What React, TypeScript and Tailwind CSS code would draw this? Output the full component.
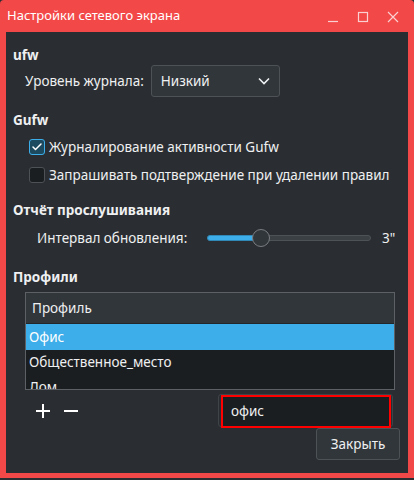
import { Check } from "lucide-react";

const profiles = ["Офис", "Общественное_место", "Дом"];

function Chevron() {
  return (
    <svg width="12" height="8" viewBox="0 0 12 8" fill="none">
      <path d="M1 1.5 L6 6.5 L11 1.5" stroke="#eff0f1" strokeWidth="1.6" />
    </svg>
  );
}

export default function App() {
  return (
    <div
      className="w-[414px] h-[480px] bg-[#2a2e32] text-[13.5px] text-[#eff0f1]"
      style={{ fontFamily: '"Noto Sans", "DejaVu Sans", sans-serif' }}
    >
      <div className="flex flex-col w-full h-[478px] bg-[#f34848] rounded-t-[4px] px-[6px] pb-[5px]">
        {/* title bar */}
        <div className="flex items-center h-[32px] shrink-0 text-[13px]">
          <span className="ml-[1px] text-white">Настройки сетевого экрана</span>
          <div className="ml-auto flex items-center">
            <svg width="12" height="12" viewBox="0 0 12 12" className="mr-[18px] mt-[1px]">
              <path d="M1 10.5 H11" stroke="#fbd0d0" strokeWidth="1.2" />
            </svg>
            <svg width="12" height="12" viewBox="0 0 12 12" className="mr-[18px] mt-[1px]">
              <rect x="1.5" y="1.5" width="9" height="9" fill="none" stroke="#fbd0d0" strokeWidth="1.2" />
            </svg>
            <svg width="12" height="12" viewBox="0 0 12 12" className="mr-[9px] mt-[1px]">
              <path d="M1 1 L11 11 M11 1 L1 11" stroke="#fbd0d0" strokeWidth="1.2" />
            </svg>
          </div>
        </div>

        {/* body */}
        <div className="flex-1 flex flex-col bg-[#2a2e32] pl-[7px] pt-[13px]">
          <div className="h-[20px] flex items-center font-bold">ufw</div>

          <div className="h-[32px] flex items-center">
            <span className="ml-[12px]">Уровень журнала:</span>
            <div className="ml-[7px] w-[129px] h-[32px] flex items-center justify-between pl-[9px] pr-[9px] bg-[#31363b] border border-[#4d5257] rounded-[3px]">
              <span>Низкий</span>
              <Chevron />
            </div>
          </div>

          <div className="h-[20px] mt-[13px] flex items-center font-bold">Gufw</div>

          <div className="h-[22px] mt-[6px] flex items-center">
            <div className="ml-[16px] w-[16px] h-[16px] rounded-[3px] border border-[#3daee9] bg-[#1e4a60] flex items-center justify-center">
              <Check size={12} strokeWidth={3} color="#ffffff" />
            </div>
            <span className="ml-[4px]">Журналирование активности Gufw</span>
          </div>

          <div className="h-[22px] mt-[6px] flex items-center">
            <div className="ml-[16px] w-[16px] h-[16px] rounded-[3px] border border-[#4d5257] bg-[#1b1e20]" />
            <span className="ml-[4px]">Запрашивать подтверждение при удалении правил</span>
          </div>

          <div className="h-[20px] mt-[14px] flex items-center font-bold">Отчёт прослушивания</div>

          <div className="h-[24px] mt-[6px] flex items-center">
            <span className="ml-[24px] w-[170px]">Интервал обновления:</span>
            <div className="relative w-[164px] h-[20px] flex items-center">
              <div className="w-full h-[6px] rounded-full bg-[#3b4045] border border-[#4d5257]" />
              <div className="absolute left-0 w-[52px] h-[6px] rounded-l-full bg-[#3daee9] border border-[#2f88b5]" />
              <div className="absolute left-[45px] w-[18px] h-[18px] rounded-full bg-[#31363b] border border-[#7a7e82]" />
            </div>
            <span className="ml-[11px]">3"</span>
          </div>

          <div className="h-[20px] mt-[17px] flex items-center font-bold">Профили</div>

          <div className="mt-[5px] ml-[12px] w-[370px] h-[98px] border border-[#5d6165] bg-[#1b1e20] overflow-hidden">
            <div className="h-[31px] flex items-center pl-[6px] bg-[#31363b] border-b border-[#24272a]">Профиль</div>
            {profiles.map((p, i) => (
              <div
                key={p}
                className={
                  i === 0
                    ? "h-[26px] flex items-center pl-[3px] bg-[#3daee9] text-white"
                    : "h-[25px] flex items-center pl-[3px]"
                }
              >
                {p}
              </div>
            ))}
          </div>

          <div className="h-[35px] mt-[3px] flex items-center pr-[15px]">
            <svg width="14" height="14" viewBox="0 0 14 14" className="ml-[23px]">
              <path d="M7 0 V14 M0 7 H14" stroke="#ffffff" strokeWidth="2" />
            </svg>
            <svg width="14" height="14" viewBox="0 0 14 14" className="ml-[14px]">
              <path d="M0 7 H14" stroke="#ffffff" strokeWidth="2" />
            </svg>
            <div className="ml-auto w-[175px] h-[33px] border border-[#3f4448] rounded-[3px] p-[1px] pl-[2px]">
              <div className="w-[170px] h-[33px] -mt-[1px] border-2 border-[#ff0000] bg-[#1b1e20] flex items-center pl-[8px]">
                офис
              </div>
            </div>
          </div>

          <div className="flex justify-end pr-[8px]">
            <div className="w-[84px] h-[32px] flex items-center justify-center bg-[#31363b] border border-[#4d5257] rounded-[3px]">
              Закрыть
            </div>
          </div>
        </div>
      </div>
    </div>
  );
}
